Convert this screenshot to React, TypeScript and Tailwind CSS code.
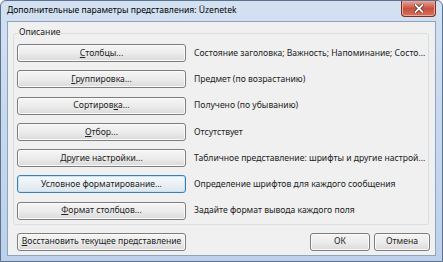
import React from 'react';

const rows = [
  { pre: '', acc: 'С', post: 'толбцы...', desc: 'Состояние заголовка; Важность; Напоминание; Состо...' },
  { pre: '', acc: 'Г', post: 'руппировка...', desc: 'Предмет (по возрастанию)' },
  { pre: 'Сортиров', acc: 'к', post: 'а...', desc: 'Получено (по убыванию)' },
  { pre: '', acc: 'О', post: 'тбор...', desc: 'Отсутствует' },
  { pre: 'Другие настройки...', acc: '', post: '', desc: 'Табличное представление: шрифты и другие настрой...' },
  { pre: 'Условное форматирование...', acc: '', post: '', desc: 'Определение шрифтов для каждого сообщения', focus: true },
  { pre: '', acc: 'Ф', post: 'ормат столбцов...', desc: 'Задайте формат вывода каждого поля' },
];

function WinButton({ children, className = '', focus = false }: { children: React.ReactNode; className?: string; focus?: boolean }) {
  return (
    <div
      className={`h-[18px] rounded-[3px] border flex items-center justify-center ${
        focus
          ? 'border-[#3c7fb1] bg-gradient-to-b from-[#f4f9fc] via-[#eaf1f6] to-[#dde6ec] shadow-[inset_0_0_0_1px_#c4e3f6]'
          : 'border-[#7d7d7d] bg-gradient-to-b from-[#f5f5f5] via-[#ececec] to-[#dadada] shadow-[inset_0_0_0_1px_#fbfbfb]'
      } ${className}`}
    >
      <span className="text-[8.6px] leading-none text-[#222] whitespace-nowrap">{children}</span>
    </div>
  );
}

export default function App() {
  return (
    <div
      className="w-[443px] h-[262px] flex flex-col border border-[#5d7290] rounded-t-[6px] bg-gradient-to-b from-[#d3e1f1] via-[#c6d8ed] to-[#bcd1e9] overflow-hidden"
      style={{ fontFamily: '"Noto Sans", "Open Sans", sans-serif' }}
    >
      {/* Title bar */}
      <div className="h-[20px] flex items-start shrink-0">
        <span className="pl-[6px] pt-[5px] text-[8.6px] leading-none text-black whitespace-nowrap">
          Дополнительные параметры представления: Üzenetek
        </span>
        <div className="ml-auto mr-[6px] w-[35px] h-[16px] rounded-b-[4px] border border-t-0 border-[#7a2e26] bg-gradient-to-b from-[#e6a496] via-[#c9503f] to-[#d6705c] shadow-[inset_0_0_0_1px_#eaa89b] flex items-center justify-center">
          <svg width="10" height="9" viewBox="0 0 10 9">
            <path d="M1.5 1 L8.5 8 M8.5 1 L1.5 8" stroke="#5a1d16" strokeWidth="3.2" strokeLinecap="square" />
            <path d="M1.5 1 L8.5 8 M8.5 1 L1.5 8" stroke="#ffffff" strokeWidth="1.8" strokeLinecap="square" />
          </svg>
        </div>
      </div>

      {/* Client area */}
      <div className="flex-1 mx-[6px] mb-[5px] border border-[#8ea3bd] bg-[#f0f0f0] flex flex-col pt-[11px] pl-[5px] pr-[6px]">
        {/* Group box */}
        <div className="relative border border-[#d5dfe5] rounded-[3px] pt-[10px] pl-[3px] pb-[4px] flex flex-col gap-[8.3px]">
          <span className="absolute left-[4px] -top-[6px] px-[1px] bg-[#f0f0f0] text-[8.6px] leading-none text-[#222]">
            Описание
          </span>
          {rows.map((r, i) => (
            <div key={i} className="flex items-center">
              <WinButton className="w-[169px] shrink-0" focus={r.focus}>
                {r.pre}
                {r.acc && <u>{r.acc}</u>}
                {r.post}
              </WinButton>
              <span className="ml-[8px] text-[8.6px] leading-none text-[#222] whitespace-nowrap">{r.desc}</span>
            </div>
          ))}
        </div>

        {/* Bottom buttons */}
        <div className="flex items-center mt-[8px] pl-[4px]">
          <WinButton className="w-[169px]">
            <u>В</u>осстановить текущее представление
          </WinButton>
          <WinButton className="w-[60px] ml-auto">ОК</WinButton>
          <WinButton className="w-[56px] ml-[4px] mr-[-1px]">Отмена</WinButton>
        </div>
      </div>
    </div>
  );
}
